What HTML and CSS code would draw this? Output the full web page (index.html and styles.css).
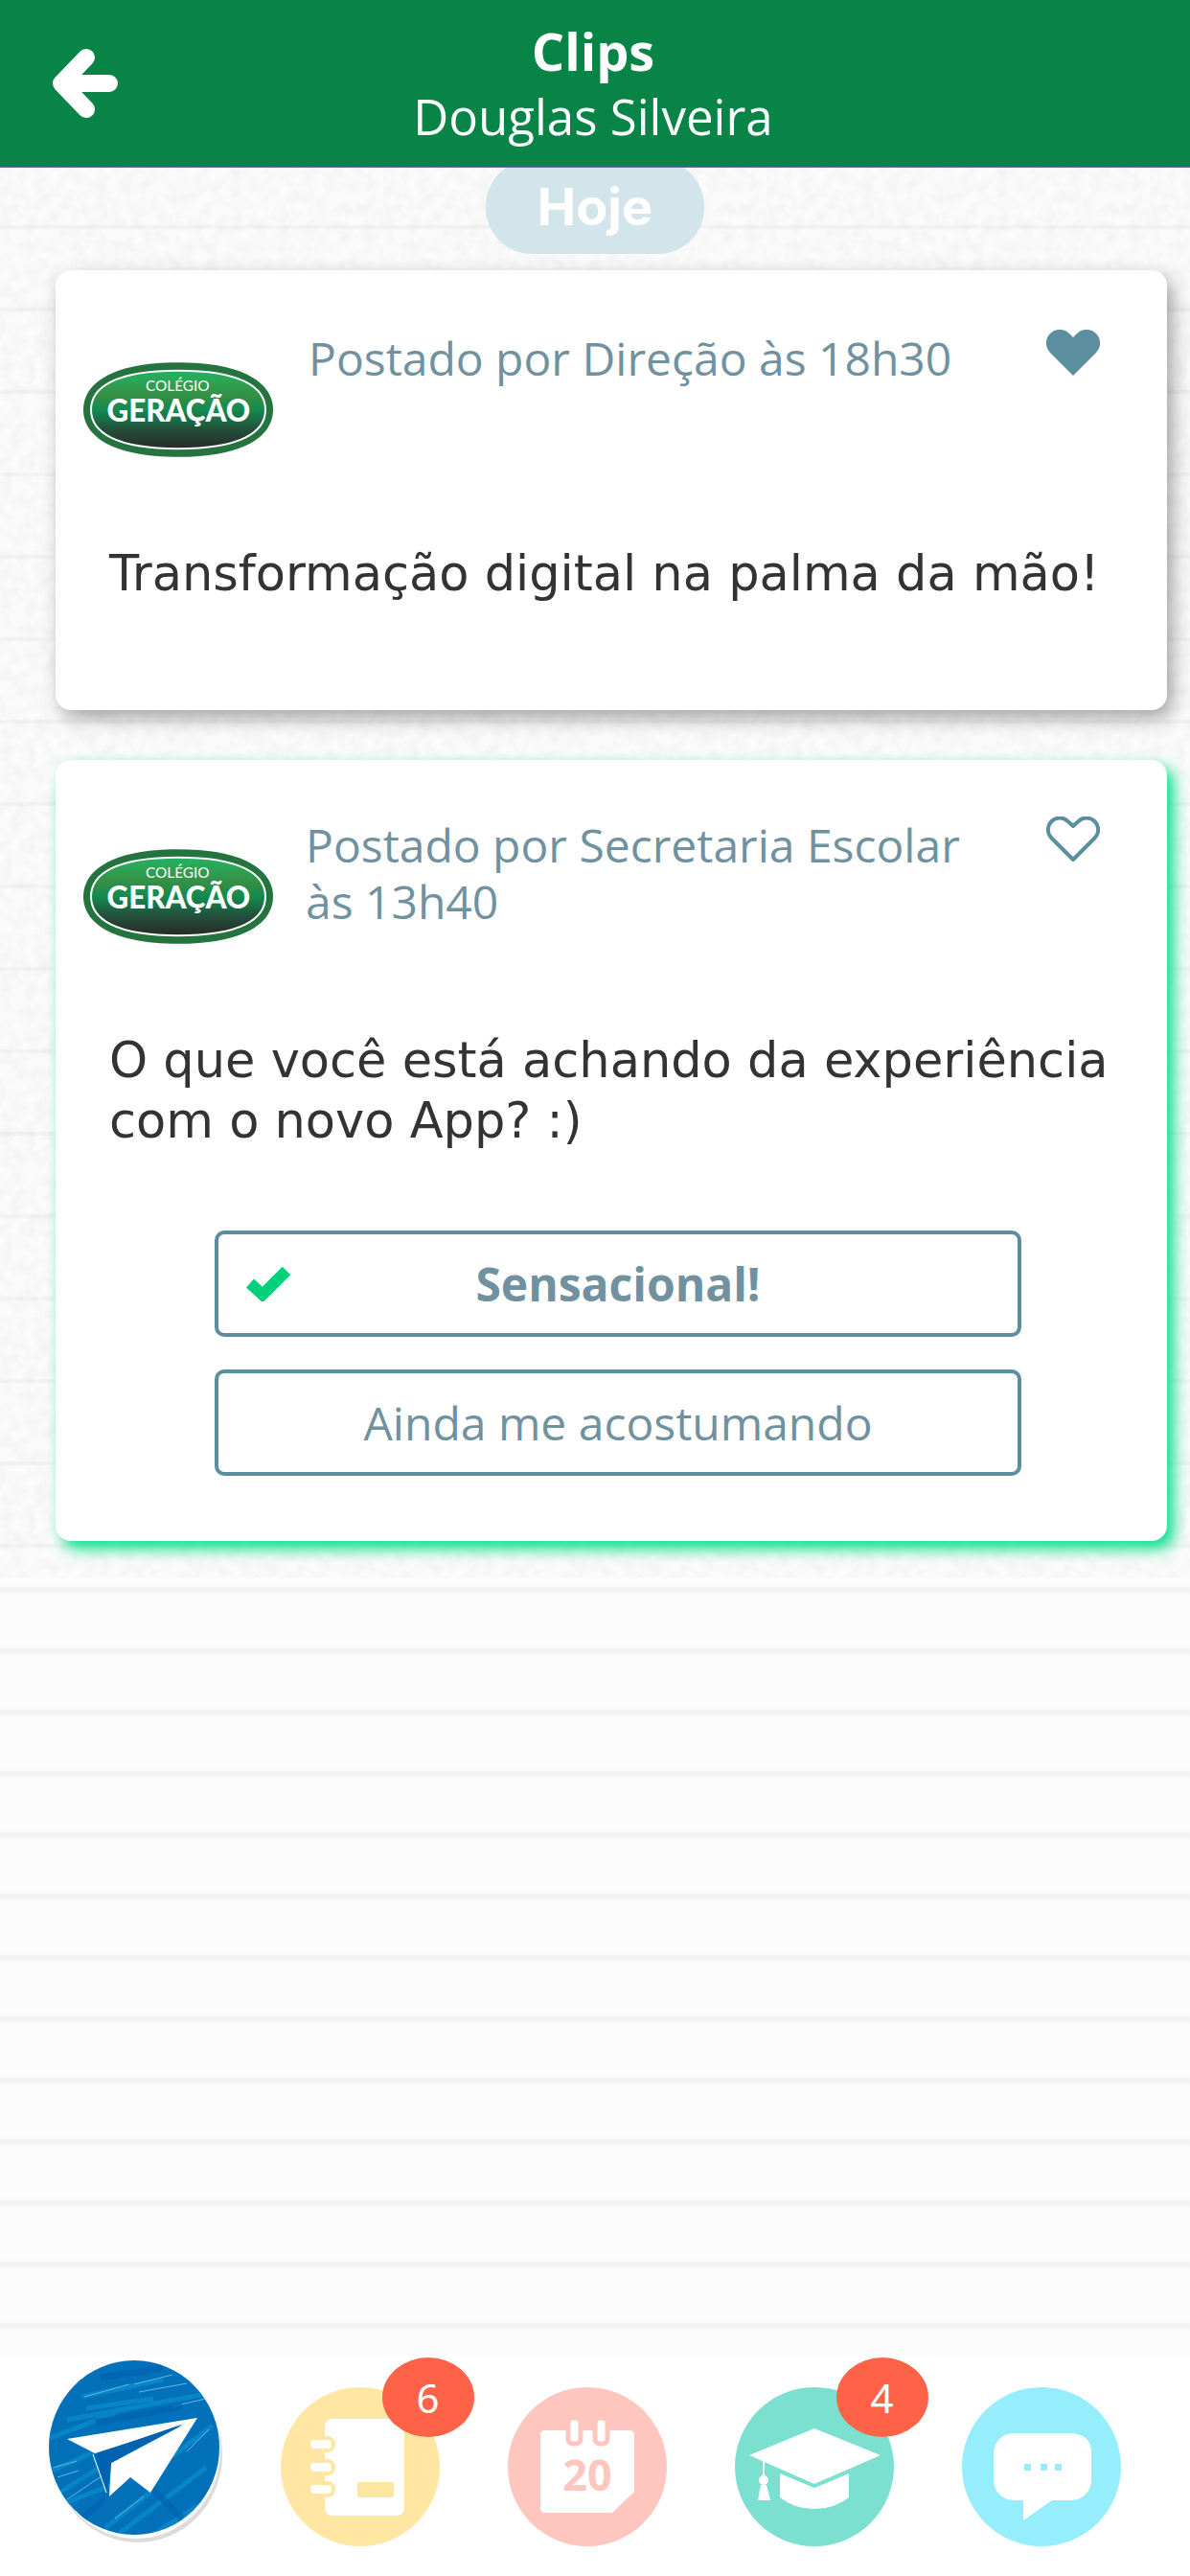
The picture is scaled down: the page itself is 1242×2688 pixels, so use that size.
FILE: index.html
```html
<!DOCTYPE html>
<html lang="pt-BR">
<head>
<meta charset="utf-8">
<meta name="viewport" content="width=device-width, initial-scale=1">
<title>Clips</title>
<link rel="stylesheet" href="styles.css">
</head>
<body>
<svg class="symbols" aria-hidden="true">
  <defs>
    <linearGradient id="logo-fill" x1="0" y1="0" x2="0" y2="1">
      <stop offset="0" stop-color="#22b262"/>
      <stop offset="0.12" stop-color="#2ba657"/>
      <stop offset="0.32" stop-color="#358f45"/>
      <stop offset="0.5" stop-color="#128a50"/>
      <stop offset="0.75" stop-color="#23503a"/>
      <stop offset="1" stop-color="#262b27"/>
    </linearGradient>
    <symbol id="logo" viewBox="81 117 594 296">
      <path fill="#25733f" d="M378 117C590 117 675 185 675 265S590 413 378 413 81 345 81 265 166 117 378 117z"/>
      <path fill="url(#logo-fill)" stroke="#fff" stroke-width="6" d="M378 143C575 143 651 195 651 265S575 387 378 387 105 335 105 265 181 143 378 143z"/>
      <text class="logo-small" x="376" y="208" text-anchor="middle">COLÉGIO</text>
      <text class="logo-big" x="379" y="304" text-anchor="middle">GERAÇÃO</text>
    </symbol>
  </defs>
</svg>

<header class="topbar">
  <button class="back" type="button" aria-label="Voltar">
    <svg viewBox="0 0 68 72"><path d="M35 9L9 36L35 63M14 36H59" fill="none" stroke="#fff" stroke-width="18" stroke-linecap="round" stroke-linejoin="round"/></svg>
  </button>
  <div class="heading">
    <h1>Clips</h1>
    <p>Douglas Silveira</p>
  </div>
</header>

<main class="feed">
  <section class="day">
    <h2 class="day-label">Hoje</h2>

    <article class="card card-note">
      <div class="card-head">
        <svg class="logo" role="img" aria-label="Colégio Geração"><use href="#logo"/></svg>
        <p class="author">Postado por Direção às 18h30</p>
        <button class="like" type="button" aria-label="Descurtir">
          <svg viewBox="0 0 56 48"><path fill="#5b8fa0" d="M28 48L4 24A14 14 0 0 1 24 4L28 8L32 4A14 14 0 0 1 52 24z"/></svg>
        </button>
      </div>
      <p class="message">Transformação digital na palma da mão!</p>
    </article>

    <article class="card card-poll">
      <div class="card-head">
        <svg class="logo" role="img" aria-label="Colégio Geração"><use href="#logo"/></svg>
        <p class="author">Postado por Secretaria Escolar às 13h40</p>
        <button class="like" type="button" aria-label="Curtir">
          <svg viewBox="0 0 56 48"><path fill="none" stroke="#5b8fa0" stroke-width="4" stroke-linejoin="round" d="M28 45L5.500 22.500A12 12 0 0 1 22.500 5L28 10L33.500 5A12 12 0 0 1 50.500 22.500z"/></svg>
        </button>
      </div>
      <p class="message">O que você está achando da experiência com o novo App? :)</p>
      <div class="options">
        <button class="option chosen" type="button">
          <svg class="tick" viewBox="0 0 48 37"><path d="M5 18L18 30L43 5" fill="none" stroke="#00d17a" stroke-width="12"/></svg>
          <span>Sensacional!</span>
        </button>
        <button class="option" type="button"><span>Ainda me acostumando</span></button>
      </div>
    </article>
  </section>
</main>

<nav class="tabs" aria-label="Principal">
  <a class="tab tab-current" href="#clips" aria-label="Clips" aria-current="page">
    <svg viewBox="-4 0 186 192">
      <defs><clipPath id="disc"><ellipse cx="90" cy="91" rx="89" ry="91"/></clipPath></defs>
      <ellipse cx="94" cy="99" rx="88" ry="91" fill="#dcdcdc"/>
      <ellipse cx="92" cy="94" rx="88" ry="92" fill="#fff"/>
      <g clip-path="url(#disc)">
        <rect width="186" height="192" fill="#0271ba"/>
        <g fill="none" stroke="#0a90cc" stroke-width="5" opacity="0.65">
          <path d="M35 38L120 20M20 62L165 35M0 82L70 55M5 115L60 90M12 138L70 102M20 148L80 125M60 175L110 135M75 180L165 112M130 100L172 68M105 185L175 140M40 50L110 40"/>
        </g>
        <g fill="none" stroke="#7cc8e8" stroke-width="1" opacity="0.8">
          <path d="M90 25L130 15M95 33L145 24M38 38L85 25M5 112L30 105M10 122L32 115M20 145L60 118M70 165L100 142M145 95L168 72M130 48L165 40"/>
        </g>
        <path fill="none" stroke="#0162b2" stroke-width="7" opacity="0.7" d="M55 18L120 8M50 65L140 48M35 165L60 145M100 125L140 165"/>
      </g>
      <path fill="#fff" d="M20 82L156 60L107 138L86 122L64 142L66 107L140 68L49 97z"/>
      <path fill="#0162b2" d="M49 98L62 138L66 107L142 66z"/>
      <path fill="none" stroke="#fff" stroke-width="1" d="M47 98L61 138"/>
    </svg>
  </a>
  <a class="tab" href="#agenda" aria-label="Agenda, 6 novidades">
    <svg viewBox="0 0 166 166">
      <circle cx="83" cy="83" r="83" fill="#ffe7a3"/>
      <rect x="46" y="33" width="83" height="101" rx="8" fill="#fff"/>
      <g fill="#fff" stroke="#ffe7a3" stroke-width="4">
        <rect x="29" y="53" width="26" height="13" rx="6"/><rect x="29" y="77" width="26" height="13" rx="6"/><rect x="29" y="100" width="26" height="13" rx="6"/>
      </g>
      <rect x="80" y="99" width="38" height="16" rx="2" fill="#ffe7a3"/>
    </svg>
    <span class="badge">6</span>
  </a>
  <a class="tab" href="#calendario" aria-label="Calendário">
    <svg viewBox="0 0 166 166">
      <circle cx="83" cy="83" r="83" fill="#ffc6bf"/>
      <path fill="#fff" d="M39 45H127Q132 45 132 50V109L109 131H39Q34 131 34 126V50Q34 45 39 45z"/>
      <g fill="#fff" stroke="#ffc6bf" stroke-width="5">
        <rect x="63" y="32" width="13" height="27" rx="5"/><rect x="91" y="32" width="13" height="27" rx="5"/>
      </g>
      <text class="date" x="83" y="108" text-anchor="middle">20</text>
    </svg>
  </a>
  <a class="tab" href="#notas" aria-label="Notas, 4 novidades">
    <svg viewBox="0 0 166 166">
      <circle cx="83" cy="83" r="83" fill="#7be0cf"/>
      <path fill="#fff" d="M15 71L83 43L152 71L83 101z"/>
      <path fill="#fff" d="M47 90L83 105L119 90V115Q104 127 83 127T47 115z"/>
      <path fill="none" stroke="#7be0cf" stroke-width="3" d="M45 87L83 103L121 87"/>
      <path fill="none" stroke="#fff" stroke-width="2" d="M30 76V96"/>
      <circle cx="30" cy="97" r="5" fill="#fff"/>
      <path fill="#fff" d="M27 102H33L37 118H24z"/>
    </svg>
    <span class="badge">4</span>
  </a>
  <a class="tab" href="#mensagens" aria-label="Mensagens">
    <svg viewBox="0 0 166 166">
      <circle cx="83" cy="83" r="83" fill="#96edfc"/>
      <path fill="#fff" d="M53 48H115Q135 50 135 68V98Q133 116 115 118H94L64 139V118H53Q35 116 33 98V68Q35 50 53 48z"/>
      <path fill="#96edfc" d="M65 80h7v7h-7zM82 80h7v7h-7zM97 80h7v7h-7z"/>
    </svg>
  </a>
</nav>
</body>
</html>
```
FILE: styles.css
```css
* { box-sizing: border-box; }

body {
  margin: 0;
  min-height: 100vh;
  display: flex;
  flex-direction: column;
  background: #fff;
  color: #333;
  font-family: "Trebuchet MS", "Open Sans", sans-serif;
}

h1, h2, p { margin: 0; }

button {
  border: 0;
  padding: 0;
  background: none;
  color: inherit;
  font: inherit;
}

svg { display: block; }

.symbols { position: absolute; width: 0; height: 0; }

/* Top bar */
.topbar {
  position: sticky;
  top: 0;
  z-index: 2;
  display: grid;
  grid-template-columns: 144px 1fr 144px;
  align-items: center;
  height: 175px;
  border-bottom: 1px solid #6a6fa8;
  background: #078446;
  color: #fff;
}

.back { padding-left: 55px; }
.back svg { width: 68px; height: 72px; }

.heading { padding-right: 4px; text-align: center; }
.heading h1 { font-size: 54px; line-height: 68px; font-weight: 700; }
.heading p { font-size: 51px; line-height: 68px; }

/* Feed on ruled paper */
.feed {
  flex: 1;
  background:
    repeating-linear-gradient(#fcfcfc 0 8px, #f4f4f4 11px 15px, #fcfcfc 18px 64px);
  background-position: 0 1471px;
}

.day {
  display: flex;
  flex-direction: column;
  padding-bottom: 38px;
  background:
    url("data:image/svg+xml,%3Csvg xmlns='http://www.w3.org/2000/svg' width='400' height='400'%3E%3Cfilter id='n'%3E%3CfeTurbulence type='fractalNoise' baseFrequency='0.08' numOctaves='3' stitchTiles='stitch'/%3E%3CfeColorMatrix values='0 0 0 0 0 0 0 0 0 0 0 0 0 0 0 0.06 0 0 0 -0.02'/%3E%3C/filter%3E%3Crect width='400' height='400' filter='url(%23n)'/%3E%3C/svg%3E"),
    repeating-linear-gradient(#fbfbfb 0 59px, #f3f3f3 61px 63px, #fbfbfb 65px 86px);
}

.day-label {
  align-self: center;
  width: 228px;
  margin: -8px 0 17px;
  border-radius: 48px;
  background: #d1e5ea;
  color: #fff;
  font: 700 54px/98px Inter, sans-serif;
  text-align: center;
}

/* Posts */
.card {
  margin: 0 24px 0 58px;
  padding: 55px 56px 68px 56px;
  border-radius: 16px;
  background: #fff;
  box-shadow: 6px 8px 20px rgba(0, 0, 0, 0.35);
}

.card-note {
  min-height: 459px;
  margin-bottom: 52px;
  padding-top: 58px;
}

.card-poll { box-shadow: 7px 8px 16px #00e08a; }

.card-head {
  display: grid;
  grid-template-columns: 198px 1fr 56px;
  column-gap: 34px;
  align-items: start;
  min-height: 227px;
  margin: 0 14px 0 -27px;
}

.card-note .card-head { column-gap: 37px; }

.logo { width: 198px; height: 99px; margin-top: 38px; }
.logo-small { fill: #fff; font: 400 46px Lato, sans-serif; }
.logo-big { fill: #fff; font: 900 94px Lato, sans-serif; }

.author {
  padding-top: 4px;
  color: #7092a0;
  font-size: 48px;
  line-height: 59px;
}

.like { padding-top: 4px; }
.like svg { width: 56px; height: 48px; }

.message {
  color: #333;
  font: 51px/63px Verdana, "DejaVu Sans", sans-serif;
}

.options {
  display: grid;
  gap: 34px;
  margin: 83px 96px 0 110px;
}

.option {
  display: grid;
  grid-template-columns: 48px 1fr 48px;
  align-items: center;
  height: 111px;
  padding: 0 28px;
  border: 4px solid #5b8fa0;
  border-radius: 10px;
  color: #7092a0;
  font-size: 48px;
}

.option span { grid-column: 2; }
.chosen { font-weight: 700; }
.tick { width: 48px; height: 37px; }

/* Bottom tabs */
.tabs {
  display: grid;
  grid-template-columns: repeat(5, 1fr);
  height: 230px;
  padding: 0 37px 0 20px;
  background: #fff;
}

.tab {
  position: relative;
  justify-self: center;
  padding-top: 33px;
  text-decoration: none;
}

.tab svg { width: 166px; height: 166px; }
.tab-current { padding-top: 5px; }
.tab-current svg { width: 186px; height: 192px; }

.date { fill: #ffc6bf; font: 700 45px "Open Sans", sans-serif; }

.badge {
  position: absolute;
  top: 2px;
  left: 106px;
  width: 96px;
  border-radius: 50%;
  background: #ff6347;
  color: #fff;
  font: 42px/83px "Noto Sans", sans-serif;
  text-align: center;
}
```
